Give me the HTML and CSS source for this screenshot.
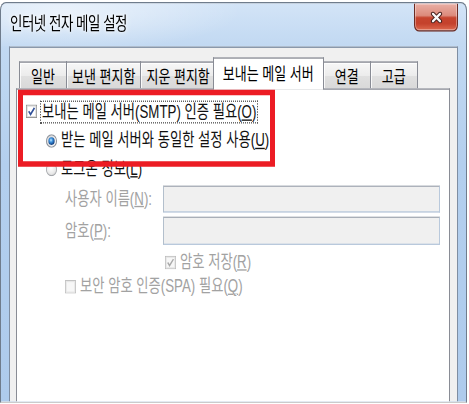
FILE: index.html
```html
<!DOCTYPE html>
<html lang="ko">
<head>
<meta charset="utf-8">
<title>인터넷 전자 메일 설정</title>
<link rel="stylesheet" href="styles.css">
</head>
<body>
<div class="screen">
  <div class="window">
    <div class="titlebar">
      <span class="title">인터넷 전자 메일 설정</span>
      <span class="close">
        <svg class="x" viewBox="0 0 14 12" preserveAspectRatio="none">
          <path d="M3.2 2.4 L10.8 9.6 M10.8 2.4 L3.2 9.6" stroke="#4b2420" stroke-width="4.4" stroke-linecap="round" fill="none"/>
          <path d="M3.2 2.4 L10.8 9.6 M10.8 2.4 L3.2 9.6" stroke="#fbfbfb" stroke-width="2.3" stroke-linecap="round" fill="none"/>
        </svg>
      </span>
    </div>
    <div class="frame">
      <div class="client">
        <div class="tabs">
          <span class="tab">일반</span>
          <span class="tab">보낸 편지함</span>
          <span class="tab">지운 편지함</span>
          <span class="tab active">보내는 메일 서버</span>
          <span class="tab">연결</span>
          <span class="tab">고급</span>
        </div>
        <div class="panel">
          <div class="row r1">
            <svg class="box" viewBox="0 0 13 13" preserveAspectRatio="none">
              <rect x="0.5" y="0.5" width="12" height="12" fill="#f6f6f6" stroke="#8e8f8f"/>
              <rect x="1.5" y="1.5" width="10" height="10" fill="#ffffff" stroke="#dcdcdc"/>
              <path d="M3.2 6.4 L5.4 9.4 L10 3.2" fill="none" stroke="#31519a" stroke-width="1.8"/>
            </svg>
            <span class="focus">보내는 메일 서버(SMTP) 인증 필요(<u>O</u>)</span>
          </div>
          <div class="row r2">
            <svg class="radio" viewBox="0 0 13 13" preserveAspectRatio="none">
              <defs>
                <linearGradient id="ring1" x1="0" y1="0" x2="1" y2="1">
                  <stop offset="0" stop-color="#cfd1d4"/>
                  <stop offset="1" stop-color="#fbfbfb"/>
                </linearGradient>
                <radialGradient id="dot1" cx="0.42" cy="0.38" r="0.62">
                  <stop offset="0" stop-color="#c8ecff"/>
                  <stop offset="0.4" stop-color="#3f95e0"/>
                  <stop offset="1" stop-color="#0d3a7c"/>
                </radialGradient>
              </defs>
              <circle cx="6.5" cy="6.5" r="6" fill="url(#ring1)" stroke="#858a92"/>
              <circle cx="6.5" cy="6.5" r="3.7" fill="url(#dot1)"/>
            </svg>
            <span>받는 메일 서버와 동일한 설정 사용(<u>U</u>)</span>
          </div>
          <div class="row r3">
            <svg class="radio" viewBox="0 0 13 13" preserveAspectRatio="none">
              <defs>
                <radialGradient id="ring2" cx="0.45" cy="0.4" r="0.7">
                  <stop offset="0" stop-color="#ffffff"/>
                  <stop offset="0.6" stop-color="#ebebeb"/>
                  <stop offset="1" stop-color="#cfcfcf"/>
                </radialGradient>
              </defs>
              <circle cx="6.5" cy="6.5" r="6" fill="url(#ring2)" stroke="#a4a7ab"/>
            </svg>
            <span>로그온 정보(<u>L</u>)</span>
          </div>
          <div class="row r4 disabled">
            <span class="label">사용자 이름(<u>N</u>):</span>
            <span class="textbox"></span>
          </div>
          <div class="row r5 disabled">
            <span class="label">암호(<u>P</u>):</span>
            <span class="textbox"></span>
          </div>
          <div class="row r6 disabled">
            <svg class="box" viewBox="0 0 13 13" preserveAspectRatio="none">
              <rect x="0.5" y="0.5" width="12" height="12" fill="#f4f4f4" stroke="#bcbcbc"/>
              <rect x="1.5" y="1.5" width="10" height="10" fill="#f7f7f7" stroke="#e6e6e6"/>
              <path d="M3.2 6.4 L5.4 9.4 L10 3.2" fill="none" stroke="#a9a9a9" stroke-width="1.6"/>
            </svg>
            <span>암호 저장(<u>R</u>)</span>
          </div>
          <div class="row r7 disabled">
            <svg class="box" viewBox="0 0 13 13" preserveAspectRatio="none">
              <rect x="0.5" y="0.5" width="12" height="12" fill="#f4f4f4" stroke="#bcbcbc"/>
              <rect x="1.5" y="1.5" width="10" height="10" fill="#f7f7f7" stroke="#e6e6e6"/>
            </svg>
            <span>보안 암호 인증(SPA) 필요(<u>Q</u>)</span>
          </div>
        </div>
      </div>
    </div>
  </div>
  <div class="annotation"></div>
</div>
</body>
</html>
```

FILE: styles.css
```css
* {
  box-sizing: border-box;
}

html,
body {
  margin: 0;
  padding: 0;
  background: #ffffff;
}

body {
  width: 469px;
  height: 404px;
  overflow: hidden;
  font-family: "Liberation Sans", "Noto Sans CJK KR", sans-serif;
  font-size: 13.3px;
  color: #111111;
}

/* the whole capture is stretched vertically */
.screen {
  position: relative;
  width: 469px;
  height: 299.3px;
  transform: scaleY(1.35);
  transform-origin: 0 0;
}

.window {
  margin-top: 2px;
  width: 467px;
  height: 296.5px;
  display: flex;
  flex-direction: column;
  overflow: hidden;
  border: 1px solid #6f7c8c;
  border-bottom: 1px solid #c9c9c9;
  border-radius: 6px 6px 0 0;
  background: linear-gradient(180deg, #d3e4f7 0px, #c2d9f2 30px, #b3cfee 120px, #aecbec 100%);
}

.titlebar {
  height: 31.5px;
  flex: none;
  display: flex;
  justify-content: space-between;
  align-items: flex-start;
  padding-left: 9px;
  background: radial-gradient(ellipse 180px 30px at 60px 6px, rgba(255, 255, 255, 0.55), rgba(255, 255, 255, 0) 100%);
}

.title {
  margin-top: 6.3px;
  line-height: 20px;
  font-size: 13.5px;
  letter-spacing: -0.5px;
  color: #000000;
  text-shadow: 0 0 6px #ffffff, 0 0 3px #ffffff;
  white-space: nowrap;
}

.close {
  width: 44px;
  height: 21.4px;
  margin-right: 8px;
  display: flex;
  align-items: center;
  justify-content: center;
  border: 1px solid #6b2b23;
  border-top: 0;
  border-radius: 0 0 5px 5px;
  background: linear-gradient(180deg, #eab0a6 0%, #dc8a7b 46%, #c7452f 52%, #c4412c 75%, #dd6a50 100%);
  box-shadow: inset 0 0 0 1px rgba(255, 255, 255, 0.35);
}

.x {
  width: 13px;
  height: 9px;
  display: block;
}

.frame {
  flex: 1;
  display: flex;
  padding: 0 8px;
  min-height: 0;
}

.client {
  flex: 1;
  display: flex;
  flex-direction: column;
  background: #f0f0f0;
  border: 1px solid #7f8ea2;
  border-bottom: 0;
  padding: 7.5px 7px 0 6px;
  min-height: 0;
}

.tabs {
  flex: none;
  height: 23.3px;
  display: flex;
  align-items: flex-end;
  padding-left: 3px;
}

.tab {
  height: 20.4px;
  min-width: 48px;
  padding: 0 5px 1px;
  margin-right: -1px;
  display: flex;
  align-items: center;
  justify-content: center;
  font-size: 13px;
  white-space: nowrap;
  color: #000000;
  border: 1px solid #898c95;
  border-bottom: 0;
  background: linear-gradient(180deg, #f7f7f7 0%, #ececec 50%, #e0e0e0 51%, #d9d9d9 100%);
  box-shadow: inset 1px 1px 0 rgba(255, 255, 255, 0.8);
}

.tab.active {
  position: relative;
  z-index: 2;
  height: 24.3px;
  margin: 0 -1px -1px -2px;
  padding: 0 9px 2px;
  background: #ffffff;
  box-shadow: none;
}

.panel {
  flex: 1;
  display: flex;
  flex-direction: column;
  background: #ffffff;
  border: 1px solid #898c95;
  border-bottom: 0;
  padding: 6px 0 0 9px;
}

.row {
  display: flex;
  align-items: center;
  height: 20px;
  line-height: 20px;
  white-space: nowrap;
  flex: none;
}

.row u {
  text-decoration-thickness: 1px;
  text-underline-offset: 1px;
}

.box {
  width: 11px;
  height: 10px;
  flex: none;
  margin-right: 4px;
  display: block;
}

.radio {
  width: 11px;
  height: 10px;
  flex: none;
  margin-right: 4px;
  display: block;
}

.focus {
  line-height: 15px;
  padding: 0 1px;
  outline: 1px dotted #555555;
  outline-offset: 0;
}

.r2 {
  margin-top: 2.2px;
  padding-left: 20px;
}

.r3 {
  margin-top: 0.5px;
  padding-left: 20px;
}

.r4 {
  margin-top: 1.8px;
  padding-left: 39px;
}

.r5 {
  margin-top: 3.7px;
  height: 20.5px;
  padding-left: 39px;
}

.r6 {
  margin-top: 4px;
  height: 18px;
  padding-left: 139px;
}

.r7 {
  margin-top: 0.5px;
  height: 18px;
  padding-left: 39px;
}

.disabled {
  color: #a2a2a2;
}

.label {
  width: 98px;
  flex: none;
}

.textbox {
  width: 277px;
  height: 100%;
  flex: none;
  background: #f0f0f0;
  border: 1px solid #b9c9dc;
  border-top-color: #a9afb8;
  border-left-color: #b3bfcc;
}

.annotation {
  position: absolute;
  z-index: 10;
  left: 18px;
  top: 65px;
  width: 257px;
  height: 57px;
  border-style: solid;
  border-color: #ec1c24;
  border-width: 4.4px 5px 4.8px 5px;
}
```
